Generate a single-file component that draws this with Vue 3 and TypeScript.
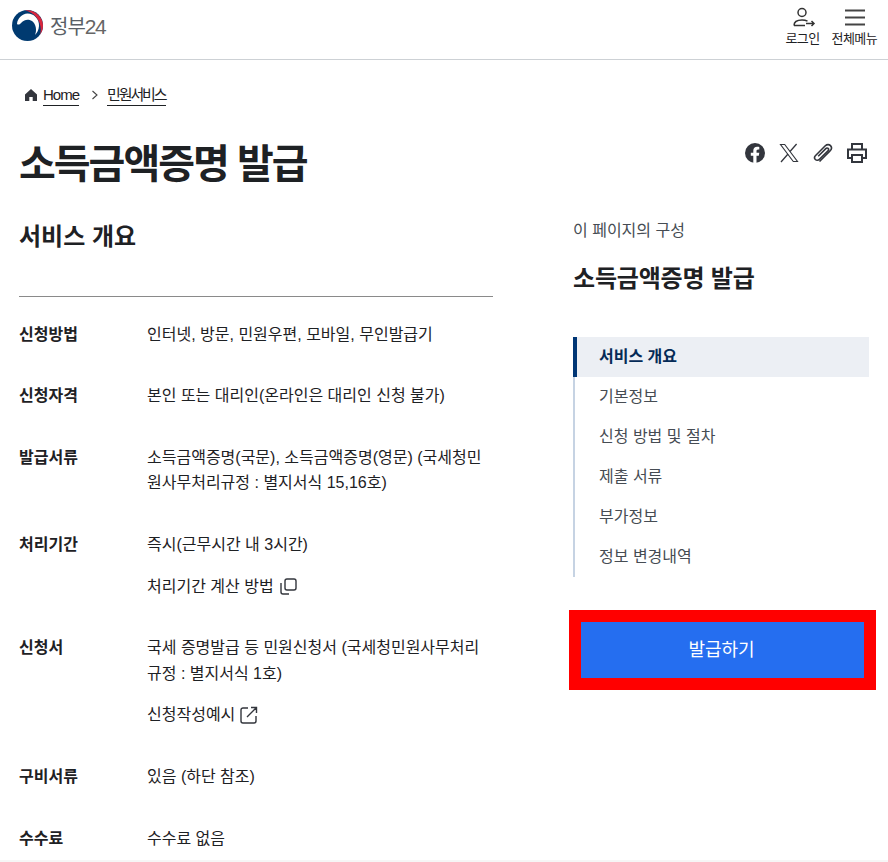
<script setup lang="ts">
interface Row { label: string; lines: string[]; link?: string; icon?: 'copy' | 'open' }
const rows: Row[] = [
  { label: '신청방법', lines: ['인터넷, 방문, 민원우편, 모바일, 무인발급기'] },
  { label: '신청자격', lines: ['본인 또는 대리인(온라인은 대리인 신청 불가)'] },
  { label: '발급서류', lines: ['소득금액증명(국문), 소득금액증명(영문) (국세청민원사무처리규정 : 별지서식 15,16호)'] },
  { label: '처리기간', lines: ['즉시(근무시간 내 3시간)'], link: '처리기간 계산 방법', icon: 'copy' },
  { label: '신청서', lines: ['국세 증명발급 등 민원신청서 (국세청민원사무처리규정 : 별지서식 1호)'], link: '신청작성예시', icon: 'open' },
  { label: '구비서류', lines: ['있음 (하단 참조)'] },
  { label: '수수료', lines: ['수수료 없음'] },
]
const nav = ['서비스 개요', '기본정보', '신청 방법 및 절차', '제출 서류', '부가정보', '정보 변경내역']
</script>

<template>
  <div class="page">
    <header class="top">
      <div class="brand">
        <svg width="31" height="31" viewBox="0 0 31 31">
          <circle cx="15.5" cy="15.5" r="15.5" fill="#003a70" />
          <path d="M5 14C5.500 8 10 4 15.500 3.500 22 3.500 27.500 9 27 16 26.800 20 25 23 23 25 25 20 24 14 20 11 16 8.500 12 10 10 12 8.500 14 6.500 15.500 5 14z" fill="#fff" />
          <path d="M13 .3C23-1 31 7 31 15.500 31 19 30 22 28 24.500 31 15 25 3 13 .3z" fill="#d9263c" />
        </svg>
        <span class="brand-name">정부<span class="brand-num">24</span></span>
      </div>
      <nav class="top-actions">
        <a class="top-action">
          <svg class="nudge" width="24" height="22" viewBox="0 0 24 22" fill="none" stroke="#333" stroke-width="1.500">
            <circle cx="10" cy="5.500" r="4" />
            <path d="M2 18.500c0-3.500 3-5.500 8-5.500 2.500 0 4 .4 5.500 1.200M2 18.500h11M14 16.500h8M19.500 14l2.500 2.500-2.500 2.500" />
          </svg>
          <span>로그인</span>
        </a>
        <a class="top-action">
          <svg class="nudge" width="22" height="22" viewBox="0 0 22 22" fill="none" stroke="#444" stroke-width="1.800">
            <path d="M1 3.500h20M1 10.500h20M1 17.500h20" />
          </svg>
          <span>전체메뉴</span>
        </a>
      </nav>
    </header>

    <div class="crumbs">
      <svg width="14" height="14" viewBox="0 0 14 14"><path d="M7 1 1 6.500V13h4.300V9h3.400v4H13V6.500z" fill="#33363d" /></svg>
      <a class="crumb crumb-home">Home</a>
      <svg class="chev" width="8" height="10" viewBox="0 0 8 10" fill="none" stroke="#444" stroke-width="1.100"><path d="M1.500 1l4.500 4-4.500 4" /></svg>
      <a class="crumb crumb-ko">민원서비스</a>
    </div>

    <div class="title-row">
      <h1>소득금액증명 발급</h1>
      <div class="share">
        <svg width="20" height="20" viewBox="1 1 20 20"><circle cx="11" cy="11" r="10" fill="#33363d" /><path d="M9.300 21v-7.300H6.800v-2.900h2.500V8.700c0-2.500 1.500-3.900 3.800-3.900 1.100 0 2.200.2 2.200.2v2.400h-1.200c-1.200 0-1.600.8-1.600 1.500v1.900h2.800l-.5 2.900h-2.300V21z" fill="#fff" /></svg>
        <svg width="20" height="20" viewBox="0 0 20 20" fill="none" stroke="#33363d"><path d="M1.500 1.500h4.200l12.800 17h-4.200z" stroke-width="1.100" /><path d="M17.600 1 11 8.500M2 19l7-8" stroke-width="1.300" /></svg>
        <svg width="20" height="20" viewBox="1 1 20 20" fill="none" stroke="#33363d" stroke-width="1.600"><path d="M7.500 19.500 18 9c2-2 1.500-4.300.5-5.400-1.300-1.300-3.500-1.500-5.200.2L3.600 13.500c-1.300 1.300-1.200 3-.2 4s2.700 1.100 4-.2l8.600-8.600c.8-.8.700-1.700.1-2.300s-1.500-.6-2.300.2l-7.600 7.600" /></svg>
        <svg width="20" height="20" viewBox="1 1 20 20" fill="none" stroke="#33363d" stroke-width="2"><path d="M6 7V2h10v5M5.500 16H2V7.500h18V16h-3.500M6 13h10v7H6z" /></svg>
      </div>
    </div>

    <main class="columns">
      <section class="content">
        <h2>서비스 개요</h2>
        <dl class="rows">
          <div v-for="row in rows" :key="row.label" class="row">
            <dt>{{ row.label }}</dt>
            <dd>
              <p v-for="line in row.lines" :key="line">{{ line }}</p>
              <a v-if="row.link" class="doc-link">
                {{ row.link }}
                <svg v-if="row.icon === 'copy'" width="18" height="18" viewBox="0 0 18 18" fill="none" stroke="#33363d" stroke-width="1.400"><rect x="6" y="2" width="11" height="11" rx="2" /><path d="M2 6v9a2 2 0 0 0 2 2h6" /></svg>
                <svg v-else width="18" height="18" viewBox="0 0 18 18" fill="none" stroke="#33363d" stroke-width="1.400"><path d="M8 2H3a2 2 0 0 0-2 2v11a2 2 0 0 0 2 2h11a2 2 0 0 0 2-2v-5M7 11l9.500-9.500M11 1.500h5.500V7" /></svg>
              </a>
            </dd>
          </div>
        </dl>
      </section>

      <aside class="side">
        <p class="side-label">이 페이지의 구성</p>
        <h3>소득금액증명 발급</h3>
        <ul class="toc">
          <li v-for="(item, i) in nav" :key="item" :class="{ active: i === 0 }">{{ item }}</li>
        </ul>
        <button class="apply" type="button">발급하기</button>
      </aside>
    </main>
  </div>
</template>

<style>
html, body { margin: 0; background: #fff; }
</style>

<style scoped>
.page {
  height: 862px;
  overflow: hidden;
  font-family: "Liberation Sans", "Noto Sans CJK KR", sans-serif;
  color: #1e2124;
  font-size: 16px;
  box-sizing: border-box;
  border-bottom: 2px solid #f6f6f6;
}
.top {
  height: 59px;
  border-bottom: 1px solid #cdd1d5;
  display: flex;
  align-items: center;
  justify-content: space-between;
  padding: 0 11px 0 12px;
}
.brand { display: flex; align-items: center; gap: 7px; margin-top: -9px; }
.brand-name { font-size: 20px; color: #5a5f66; letter-spacing: -1px; }
.brand-num { font-size: 21px; letter-spacing: -1.5px; color: #666; }
.top-actions { display: flex; gap: 12px; align-self: flex-start; padding-top: 7px; }
.top-action { display: flex; flex-direction: column; align-items: center; gap: 1px; font-size: 13px; line-height: 18px; color: #1e2124; letter-spacing: -0.6px; }
.nudge { margin-left: 2px; }
.crumbs { display: flex; align-items: center; padding: 24px 0 0 24px; height: 22px; font-size: 15px; color: #1e2124; }
.crumb { border-bottom: 1px solid #1e2124; line-height: 20px; }
.crumb-home { letter-spacing: -1px; margin-left: 5px; }
.crumb-ko { letter-spacing: -2.1px; }
.chev { margin: 0 8px 0 12px; }
.title-row { display: flex; justify-content: space-between; align-items: flex-start; padding: 0 21px 0 19px; margin-top: 28px; }
h1 { margin: 0; font-size: 40px; line-height: 60px; font-weight: 700; letter-spacing: -2px; }
.share { display: flex; gap: 14px; align-items: center; padding-top: 9px; }
.columns { display: flex; gap: 80px; padding: 0 19px; margin-top: 25px; }
.content { width: 474px; flex: none; }
h2 { margin: 0; font-size: 24px; line-height: 36px; font-weight: 700; height: 77px; border-bottom: 1px solid #8a8a8a; }
.rows { margin: 24.6px 0 0; }
.row { display: flex; margin-bottom: 36px; line-height: 25.6px; }
dt { width: 128px; flex: none; font-weight: 700; }
dd { margin: 0; flex: 1; }
p { margin: 0; }
.doc-link { display: flex; align-items: center; gap: 5px; margin-top: 16px; }
.side { width: 296px; flex: none; }
.side-label { font-size: 16px; line-height: 24px; color: #464c53; margin-top: 0; }
h3 { margin: 18px 0 0; font-size: 24px; line-height: 36px; font-weight: 700; letter-spacing: -0.2px; }
.toc { list-style: none; margin: 40px 0 0; padding: 0; border-left: 2px solid #c6d3e3; }
.toc li { height: 40px; line-height: 40px; padding-left: 24px; color: #464c53; }
.toc li.active { margin-left: -2px; padding-left: 22px; border-left: 4px solid #003675; background: #eceff4; color: #052b57; font-weight: 700; }
.apply {
  display: block;
  width: 283px;
  height: 56px;
  margin: 45px 0 0 8px;
  padding: 0 2px 4px 0;
  background: #256ef0;
  color: #fff;
  border: 0;
  outline: 12px solid #f00;
  font: inherit;
  font-size: 18px;
}
</style>
